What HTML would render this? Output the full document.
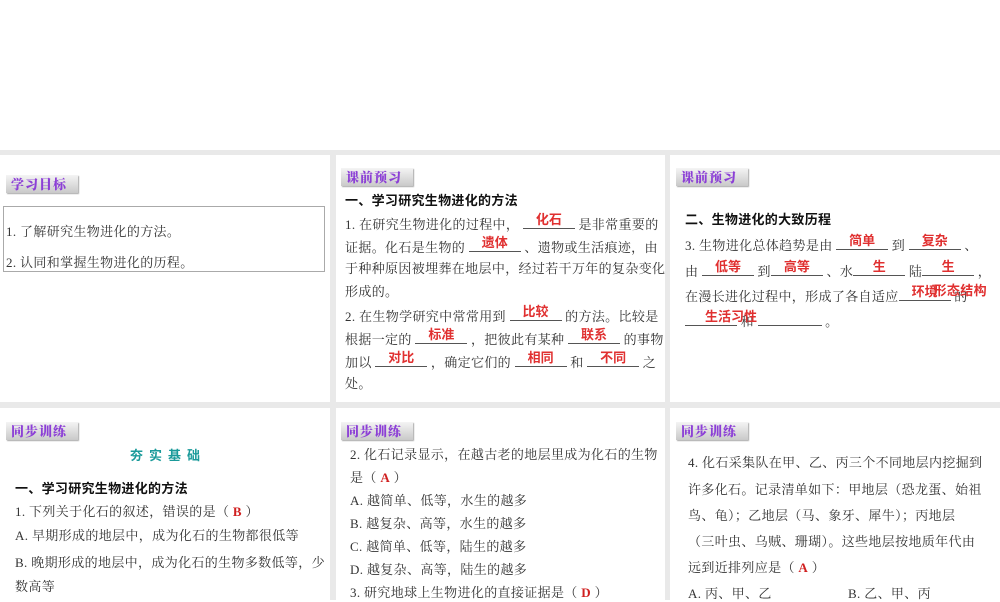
<!DOCTYPE html>
<html><head><meta charset="utf-8"><style>
body{margin:0;width:1000px;height:600px;background:#fff;position:relative;overflow:hidden;font-family:"Liberation Serif","Noto Serif CJK SC",serif;color:#333}
.bg{position:absolute;left:0;top:150px;width:1000px;height:450px;background:#e9e9e9}
.p{position:absolute;background:#fff}
.b{position:absolute;height:18px;width:72px;background:linear-gradient(#f4f4f4,#c9c9c9);box-shadow:1px 1px 1px #aaa;color:#8c3fd6;font:900 13px "Noto Serif CJK SC",serif;line-height:18px;padding-left:5px;box-sizing:border-box;letter-spacing:1px}
.t{position:absolute;white-space:nowrap;font-size:13px;line-height:16px;letter-spacing:0.35px}
.h{font-family:"Noto Sans CJK SC",sans-serif;font-weight:bold;color:#111;letter-spacing:0.3px}
.u{display:inline-block;border-bottom:1px solid #555;height:13px;position:relative;vertical-align:baseline}
.r{position:absolute;left:0;right:0;top:-6px;text-align:center;color:#e03030;font:bold 13px "Noto Sans CJK SC",sans-serif;letter-spacing:0}
.red{color:#d02020;font-family:"Liberation Serif",serif;font-weight:bold}
</style></head><body>
<div class="bg"></div>
<div class="p" style="left:0;top:155px;width:330px;height:247px"></div>
<div class="p" style="left:336px;top:155px;width:329px;height:247px"></div>
<div class="p" style="left:670px;top:155px;width:330px;height:247px"></div>
<div class="p" style="left:0;top:408px;width:330px;height:192px"></div>
<div class="p" style="left:336px;top:408px;width:329px;height:192px"></div>
<div class="p" style="left:670px;top:408px;width:330px;height:192px"></div>

<div class="b" style="left:6px;top:175px">学习目标</div>
<div style="position:absolute;left:3px;top:206px;width:320px;height:64px;border:1px solid #aaa"></div>
<div class="t" style="left:6px;top:224px">1. 了解研究生物进化的方法。</div>
<div class="t" style="left:6px;top:255px">2. 认同和掌握生物进化的历程。</div>

<div class="b" style="left:341px;top:168px">课前预习</div>
<div class="t h" style="left:345px;top:192px">一、学习研究生物进化的方法</div>
<div class="t" style="left:345px;top:215px">1. 在研究生物进化的过程中， <span class="u" style="width:52px"><span class="r">化石</span></span> 是非常重要的</div>
<div class="t" style="left:345px;top:238px">证据。化石是生物的 <span class="u" style="width:52px"><span class="r">遗体</span></span> 、遗物或生活痕迹，由</div>
<div class="t" style="left:345px;top:261px">于种种原因被埋葬在地层中，经过若干万年的复杂变化</div>
<div class="t" style="left:345px;top:284px">形成的。</div>
<div class="t" style="left:345px;top:307px">2. 在生物学研究中常常用到 <span class="u" style="width:52px"><span class="r">比较</span></span> 的方法。比较是</div>
<div class="t" style="left:345px;top:330px">根据一定的 <span class="u" style="width:52px"><span class="r">标准</span></span> ，把彼此有某种 <span class="u" style="width:52px"><span class="r">联系</span></span> 的事物</div>
<div class="t" style="left:345px;top:353px">加以 <span class="u" style="width:52px"><span class="r">对比</span></span> ，确定它们的 <span class="u" style="width:52px"><span class="r">相同</span></span> 和 <span class="u" style="width:52px"><span class="r">不同</span></span> 之</div>
<div class="t" style="left:345px;top:376px">处。</div>

<div class="b" style="left:676px;top:168px">课前预习</div>
<div class="t h" style="left:685px;top:211px">二、生物进化的大致历程</div>
<div class="t" style="left:685px;top:236px">3. 生物进化总体趋势是由 <span class="u" style="width:52px"><span class="r">简单</span></span> 到 <span class="u" style="width:52px"><span class="r">复杂</span></span> 、</div>
<div class="t" style="left:685px;top:262px">由 <span class="u" style="width:52px"><span class="r">低等</span></span> 到<span class="u" style="width:52px"><span class="r">高等</span></span> 、水<span class="u" style="width:52px"><span class="r">生</span></span> 陆<span class="u" style="width:52px"><span class="r">生</span></span> ，</div>
<div class="t" style="left:685px;top:287px">在漫长进化过程中，形成了各自适应<span class="u" style="width:52px"><span class="r">环境</span></span> 的<span style="color:#e03030;font-weight:bold;font-family:'Noto Sans CJK SC';margin-left:-34px;position:relative;top:-6px">形态结构</span></div>
<div class="t" style="left:685px;top:312px"><span class="u" style="width:52px"><span class="r" style="left:20px;right:auto">生活习性</span></span> 和 <span class="u" style="width:64px"></span> 。</div>

<div class="b" style="left:6px;top:422px">同步训练</div>
<div class="t" style="left:130px;top:447px;color:#1a9a9a;font-weight:bold;font-family:'Noto Sans CJK SC';letter-spacing:6px">夯实基础</div>
<div class="t h" style="left:15px;top:480px">一、学习研究生物进化的方法</div>
<div class="t" style="left:15px;top:504px">1. 下列关于化石的叙述，错误的是（ <span class="red">B</span> ）</div>
<div class="t" style="left:15px;top:528px">A. 早期形成的地层中，成为化石的生物都很低等</div>
<div class="t" style="left:15px;top:555px">B. 晚期形成的地层中，成为化石的生物多数低等，少</div>
<div class="t" style="left:15px;top:579px">数高等</div>

<div class="b" style="left:341px;top:422px">同步训练</div>
<div class="t" style="left:350px;top:447px">2. 化石记录显示，在越古老的地层里成为化石的生物</div>
<div class="t" style="left:350px;top:470px">是（ <span class="red">A</span> ）</div>
<div class="t" style="left:350px;top:493px">A. 越简单、低等，水生的越多</div>
<div class="t" style="left:350px;top:516px">B. 越复杂、高等，水生的越多</div>
<div class="t" style="left:350px;top:539px">C. 越简单、低等，陆生的越多</div>
<div class="t" style="left:350px;top:562px">D. 越复杂、高等，陆生的越多</div>
<div class="t" style="left:350px;top:585px">3. 研究地球上生物进化的直接证据是（ <span class="red">D</span> ）</div>

<div class="b" style="left:676px;top:422px">同步训练</div>
<div class="t" style="left:688px;top:455px">4. 化石采集队在甲、乙、丙三个不同地层内挖掘到</div>
<div class="t" style="left:688px;top:482px">许多化石。记录清单如下：甲地层（恐龙蛋、始祖</div>
<div class="t" style="left:688px;top:508px">鸟、龟）；乙地层（马、象牙、犀牛）；丙地层</div>
<div class="t" style="left:688px;top:534px">（三叶虫、乌贼、珊瑚）。这些地层按地质年代由</div>
<div class="t" style="left:688px;top:560px">远到近排列应是（ <span class="red">A</span> ）</div>
<div class="t" style="left:688px;top:586px">A. 丙、甲、乙</div>
<div class="t" style="left:848px;top:586px">B. 乙、甲、丙</div>
</body></html>
